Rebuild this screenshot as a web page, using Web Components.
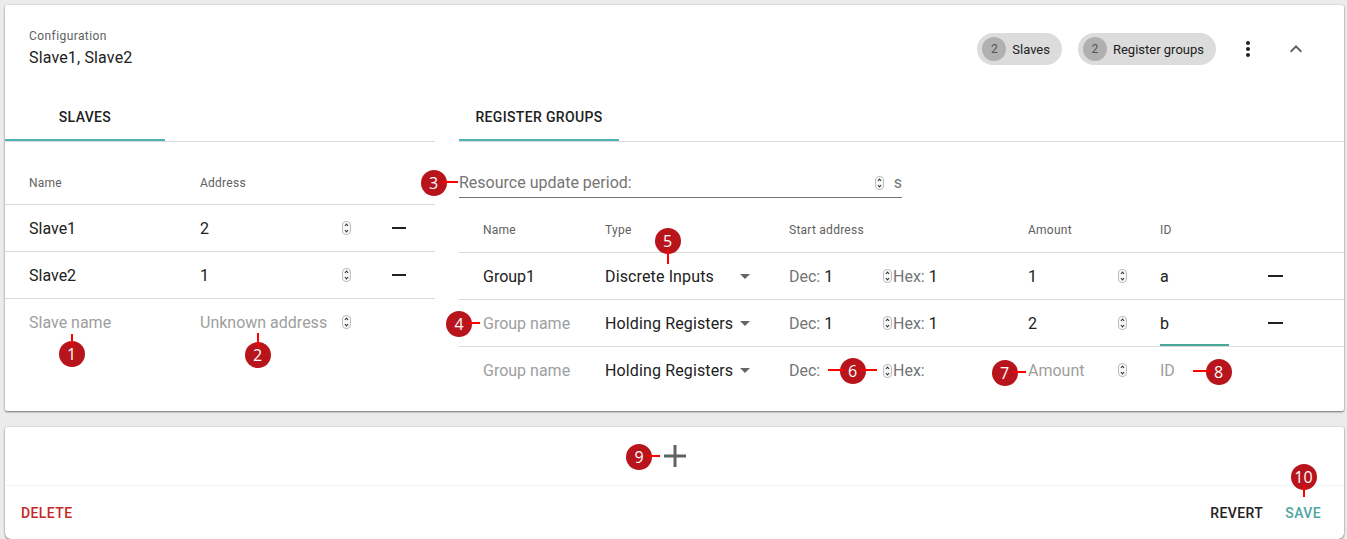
<!DOCTYPE html>
<html>
<head>
<meta charset="utf-8">
<title>Configuration</title>
<style>
  html, body { margin: 0; height: 539px; overflow: hidden; background: #ebebeb; }
  body { font-family: Roboto, "Liberation Sans", sans-serif; color: #212121; }
</style>
</head>
<body>
<x-page>
  <x-card style="height: 406px">
    <x-config-head title="Configuration" value="Slave1, Slave2">
      <x-chip count="2">Slaves</x-chip>
      <x-chip count="2">Register groups</x-chip>
    </x-config-head>
    <x-columns>
      <x-pane slot="left" tab="SLAVES">
        <x-row head cols="171px 192px 14px" style="height: 63px; padding-bottom: 14px">
          <span>Name</span><span>Address</span>
        </x-row>
        <x-row cols="171px 192px 14px">
          <x-field value="Slave1"></x-field>
          <x-field value="2" stepper="142"></x-field>
          <x-minus></x-minus>
        </x-row>
        <x-row cols="171px 192px 14px">
          <x-field value="Slave2"></x-field>
          <x-field value="1" stepper="142"></x-field>
          <x-minus></x-minus>
        </x-row>
        <x-row last cols="171px 192px 14px">
          <x-field placeholder="Slave name"></x-field>
          <x-field placeholder="Unknown address" stepper="142"></x-field>
        </x-row>
      </x-pane>
      <x-pane slot="right" tab="REGISTER GROUPS">
        <x-period></x-period>
        <x-row head cols="122px 184px 239px 132px 108px 15px" style="height: 55px; padding-bottom: 15px">
          <span>Name</span><span>Type</span><span>Start address</span><span>Amount</span><span>ID</span>
        </x-row>
        <x-row cols="122px 184px 239px 132px 108px 15px">
          <x-field value="Group1"></x-field>
          <x-select value="Discrete Inputs"></x-select>
          <x-address dec="1" hex="1"></x-address>
          <x-field value="1" stepper="90"></x-field>
          <x-field value="a"></x-field>
          <x-minus></x-minus>
        </x-row>
        <x-row cols="122px 184px 239px 132px 108px 15px">
          <x-field placeholder="Group name"></x-field>
          <x-select value="Holding Registers"></x-select>
          <x-address dec="1" hex="1"></x-address>
          <x-field value="2" stepper="90"></x-field>
          <x-field value="b" focused></x-field>
          <x-minus></x-minus>
        </x-row>
        <x-row last cols="122px 184px 239px 132px 108px 15px">
          <x-field placeholder="Group name"></x-field>
          <x-select value="Holding Registers"></x-select>
          <x-address></x-address>
          <x-field placeholder="Amount" stepper="90"></x-field>
          <x-field placeholder="ID"></x-field>
        </x-row>
      </x-pane>
    </x-columns>
  </x-card>
  <x-card style="height: 112px; margin-top: 16px; border-radius: 2px 2px 6px 6px">
    <x-add-bar></x-add-bar>
    <x-actions></x-actions>
  </x-card>

  <x-callout n="1" cx="71.5" cy="354" up="20"></x-callout>
  <x-callout n="2" cx="257.5" cy="355" up="22"></x-callout>
  <x-callout n="3" cx="433.5" cy="183" right="24"></x-callout>
  <x-callout n="4" cx="459" cy="324" right="21"></x-callout>
  <x-callout n="5" cx="667.5" cy="240.5" down="23"></x-callout>
  <x-callout n="6" cx="852.5" cy="371" left="25" right="24"></x-callout>
  <x-callout n="7" cx="1004.5" cy="373" right="21"></x-callout>
  <x-callout n="8" cx="1218.5" cy="372" left="26"></x-callout>
  <x-callout n="9" cx="639" cy="457" right="21"></x-callout>
  <x-callout n="10" cx="1303.5" cy="477" down="20"></x-callout>
</x-page>

<script>
"use strict";

(() => {
  const define = (name, css, html, init) => {
    customElements.define(name, class extends HTMLElement {
      constructor() {
        super();
        this.attachShadow({mode: "open"});
      }

      connectedCallback() {
        const attr = (key, def = "") => this.hasAttribute(key) ? this.getAttribute(key) : def;
        this.shadowRoot.innerHTML = `<style>${css}</style>${typeof html === "function" ? html(attr) : html}`;
        if (init) {
          init(this, attr);
        }
      }
    });
  };

  const STEPPER = `
    <svg width="9" height="14" viewBox="0 0 9 14" style="display:block;flex:none">
      <rect x=".5" y=".5" width="8" height="13" rx="3.5" fill="#f8f8f8" stroke="#bdbdbd"/>
      <path d="M2.9 5 4.5 3.2 6.1 5M2.9 9 4.5 10.8 6.1 9" fill="none" stroke="#333" stroke-width="1.1"/>
    </svg>`;

  define("x-page", `
    :host { display: block; position: relative; width: 1339px; height: 539px; padding: 5px 0 0 5px; }
  `, `<slot></slot>`);

  define("x-card", `
    :host {
      display: block;
      background: #fff;
      border-radius: 2px;
      box-shadow: 0 1px 2px rgba(0, 0, 0, .5), 0 0 2px rgba(0, 0, 0, .12);
    }
  `, `<slot></slot>`);

  define("x-config-head", `
    :host { display: flex; justify-content: space-between; height: 88px; box-sizing: border-box; padding: 23px 36px 0 24px; }
    #title { font-size: 12px; line-height: 16px; letter-spacing: .42px; color: #616161; }
    #value { font-size: 16px; line-height: 22px; margin-top: 3px; letter-spacing: .15px; color: #212121; }
    #tools { display: flex; align-items: center; height: 32px; margin-top: 5px; }
    ::slotted(x-chip) { margin-right: 16px; }
    svg { display: block; }
    #more { margin: 0 24px 0 4px; }
  `, attr => `
    <div>
      <div id="title">${attr("title")}</div>
      <div id="value">${attr("value")}</div>
    </div>
    <div id="tools">
      <slot></slot>
      <svg id="more" width="24" height="24" viewBox="0 0 24 24" fill="#212121"><path d="M12 8c1.1 0 2-.9 2-2s-.9-2-2-2-2 .9-2 2 .9 2 2 2zm0 2c-1.1 0-2 .9-2 2s.9 2 2 2 2-.9 2-2-.9-2-2-2zm0 6c-1.1 0-2 .9-2 2s.9 2 2 2 2-.9 2-2-.9-2-2-2z"/></svg>
      <svg width="24" height="24" viewBox="0 0 24 24" fill="#616161"><path d="M12 8l-6 6 1.41 1.41L12 10.83l4.59 4.58L18 14z"/></svg>
    </div>
  `);

  define("x-chip", `
    :host {
      display: inline-flex;
      align-items: center;
      height: 32px;
      border-radius: 16px;
      background: #dcdcdc;
      padding: 0 12px 0 5px;
      font-size: 13px;
      color: #212121;
    }
    #count {
      width: 24px;
      height: 24px;
      border-radius: 50%;
      background: #b0b0b0;
      color: #555;
      font-size: 12px;
      line-height: 24px;
      text-align: center;
      margin-right: 6px;
    }
  `, attr => `<span id="count">${attr("count")}</span><slot></slot>`);

  define("x-columns", `
    :host { display: flex; gap: 24px; }
    #left { flex: 0 0 430px; display: block; }
    #right { flex: 1; display: block; }
  `, `
    <div id="left"><slot name="left"></slot></div>
    <div id="right"><slot name="right"></slot></div>
  `);

  define("x-pane", `
    :host { display: block; }
    #bar { height: 48px; border-bottom: 1px solid #dadada; }
    #tab {
      width: 160px;
      height: 48px;
      box-sizing: border-box;
      border-bottom: 2px solid #4fb3b3;
      text-align: center;
      font-size: 14px;
      font-weight: 500;
      line-height: 48px;
      letter-spacing: .35px;
      color: #212121;
    }
  `, attr => `<div id="bar"><div id="tab">${attr("tab")}</div></div><slot></slot>`);

  define("x-row", `
    :host {
      display: grid;
      align-items: center;
      height: 47px;
      box-sizing: border-box;
      padding-left: 24px;
      border-bottom: 1px solid #dadada;
      grid-template-columns: var(--cols);
    }
    :host([last]) { border-bottom: 0; }
    :host([head]) {
      align-items: end;
      font-size: 12px;
      line-height: 14px;
      letter-spacing: .25px;
      color: #616161;
    }
  `, `<slot></slot>`, (el, attr) => {
    el.style.setProperty("--cols", attr("cols"));
  });

  define("x-field", `
    :host {
      display: flex;
      align-items: center;
      align-self: stretch;
      position: relative;
      font-size: 16px;
      color: #212121;
    }
    #ph { color: #9e9e9e; }
    #text { flex: none; }
    #step { position: absolute; top: 16px; }
    #line { position: absolute; left: 0; width: 69px; bottom: 0; height: 2px; background: #45a898; }
  `, attr => `
    <span id="text">${attr("value")}</span>
    <span id="ph">${attr("placeholder")}</span>
    ${attr("stepper") ? `<span id="step" style="left:${attr("stepper")}px">${STEPPER}</span>` : ""}
    ${attr("focused", null) !== null ? `<span id="line"></span>` : ""}
  `);

  define("x-select", `
    :host { display: flex; align-items: center; width: 145px; justify-content: space-between; font-size: 16px; letter-spacing: .13px; color: #212121; }
    #arrow { width: 0; height: 0; border: 5px solid transparent; border-top-color: #666; border-bottom: 0; }
  `, attr => `<span>${attr("value")}</span><span id="arrow"></span>`);

  define("x-address", `
    :host { display: flex; align-items: center; font-size: 16px; color: #757575; }
    #dec { width: 94px; }
    #hex { margin-left: 1px; }
    b { font-weight: 400; color: #212121; }
  `, attr => `
    <span id="dec">Dec: <b>${attr("dec")}</b></span>
    ${STEPPER}
    <span id="hex">Hex: <b>${attr("hex")}</b></span>
  `);

  define("x-minus", `
    :host { display: block; height: 2px; background: #212121; }
  `, ``);

  define("x-period", `
    :host {
      display: flex;
      align-items: center;
      width: 443px;
      height: 32px;
      box-sizing: border-box;
      margin-top: 24px;
      padding-top: 2px;
      border-bottom: 1px solid #757575;
      font-size: 16px;
      color: #757575;
    }
    #label { width: 416px; }
    #unit { margin-left: 10px; }
  `, `<span id="label">Resource update period:</span>${STEPPER}<span id="unit">s</span>`);

  define("x-add-bar", `
    :host { display: flex; justify-content: center; align-items: center; height: 58px; border-bottom: 1px solid #f2f2f2; padding-left: 1px; }
    svg { display: block; }
  `, `<svg width="22" height="22" viewBox="0 0 22 22" fill="#616161"><path d="M9.5 0h3v9.5H22v3h-9.5V22h-3v-9.5H0v-3h9.5z"/></svg>`);

  define("x-actions", `
    :host {
      display: flex;
      align-items: center;
      height: 53px;
      padding: 0 23px 0 16px;
      font-size: 14px;
      font-weight: 500;
      letter-spacing: .4px;
    }
    #delete { color: #c62828; }
    #revert { margin-left: auto; color: #212121; }
    #save { margin-left: 22px; color: #4da6a0; }
  `, `<span id="delete">DELETE</span><span id="revert">REVERT</span><span id="save">SAVE</span>`);

  // numbered markers sit over the form, so these are placed by coordinate
  define("x-callout", `
    :host { position: absolute; width: 26px; height: 26px; margin: -13px 0 0 -13px; z-index: 2; }
    #dot {
      width: 26px;
      height: 26px;
      border-radius: 50%;
      background: #b8141c;
      color: #fff;
      font: 16px/26px "Open Sans", sans-serif;
      text-align: center;
    }
    i { position: absolute; background: #f00; }
  `, attr => {
    const lines = [];
    const start = 8;
    if (attr("up")) {
      lines.push(`left:12px;width:2px;bottom:${13 + start}px;height:${attr("up") - start}px`);
    }
    if (attr("down")) {
      lines.push(`left:12px;width:2px;top:${13 + start}px;height:${attr("down") - start}px`);
    }
    if (attr("left")) {
      lines.push(`top:11px;height:2px;right:${13 + start}px;width:${attr("left") - start}px`);
    }
    if (attr("right")) {
      lines.push(`top:11px;height:2px;left:${13 + start}px;width:${attr("right") - start}px`);
    }
    return `<div id="dot">${attr("n")}</div>${lines.map(l => `<i style="${l}"></i>`).join("")}`;
  }, (el, attr) => {
    el.style.left = `${attr("cx")}px`;
    el.style.top = `${attr("cy")}px`;
  });
})();
</script>
</body>
</html>
